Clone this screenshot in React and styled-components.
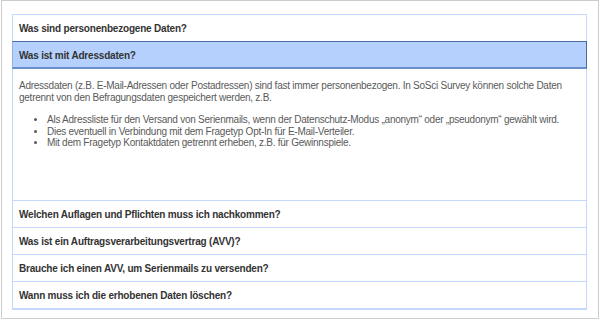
import React, { useState } from 'react';
import styled, { createGlobalStyle } from 'styled-components';

const GlobalStyle = createGlobalStyle`
  html, body {
    margin: 0;
    padding: 0;
    background: #ffffff;
  }
  body {
    font-family: 'Liberation Sans', Arial, sans-serif;
  }
`;

// Styled Components
const Frame = styled.div`
  box-sizing: border-box;
  width: 598px;
  height: 319px;
  margin-left: 1px;
  border: 1px solid #cccccc;
  padding: 13px 10px 0 10px;
  background: #ffffff;
`;

const Accordion = styled.div`
  width: 575px;
  border-bottom: 2px solid #c3d8fb;
`;

const Item = styled.div`
  display: flex;
  flex-direction: column;
`;

const Header = styled.button`
  box-sizing: border-box;
  display: flex;
  align-items: center;
  width: 100%;
  height: ${(p) => (p.$active ? '28px' : '27px')};
  margin: 0;
  padding: 1px 0 0 6px;
  font-family: 'Liberation Sans', Arial, sans-serif;
  font-size: 10px;
  font-weight: bold;
  letter-spacing: -0.2px;
  color: #333333;
  text-align: left;
  cursor: pointer;
  background: ${(p) => (p.$active ? '#b5d0fc' : '#ffffff')};
  border-style: solid;
  border-width: ${(p) => (p.$active ? '1px 1px 2px 1px' : '1px 1px 0 1px')};
  border-color: ${(p) =>
    p.$active ? '#4b6ba6 #4b6ba6 #6a8dcb #8eb0ea' : '#c3d8fb'};
`;

const Content = styled.div`
  box-sizing: border-box;
  height: 131px;
  padding: 11px 6px 0 6px;
  border-left: 1px solid #c3d8fb;
  border-right: 1px solid #c3d8fb;
  font-size: 10px;
  letter-spacing: -0.25px;
  line-height: 12px;
  color: #5a5a5a;
`;

const Paragraph = styled.p`
  margin: 0 0 10px 0;
`;

const List = styled.ul`
  margin: 0;
  padding: 0 0 0 28px;
  line-height: 11.5px;
`;

const faq = [
  { q: 'Was sind personenbezogene Daten?' },
  { q: 'Was ist mit Adressdaten?' },
  { q: 'Welchen Auflagen und Pflichten muss ich nachkommen?' },
  { q: 'Was ist ein Auftragsverarbeitungsvertrag (AVV)?' },
  { q: 'Brauche ich einen AVV, um Serienmails zu versenden?' },
  { q: 'Wann muss ich die erhobenen Daten löschen?' },
];

const App = () => {
  const [open, setOpen] = useState(1);

  return (
    <>
      <GlobalStyle />
      <Frame>
        <Accordion>
          {faq.map((item, i) => (
            <Item key={item.q}>
              <Header $active={open === i} onClick={() => setOpen(open === i ? -1 : i)}>
                {item.q}
              </Header>
              {open === i && i === 1 && (
                <Content>
                  <Paragraph>
                    Adressdaten (z.B. E-Mail-Adressen oder Postadressen) sind fast immer
                    personenbezogen. In SoSci Survey können solche Daten getrennt von den
                    Befragungsdaten gespeichert werden, z.B.
                  </Paragraph>
                  <List>
                    <li>
                      Als Adressliste für den Versand von Serienmails, wenn der
                      Datenschutz-Modus „anonym“ oder „pseudonym“ gewählt wird.
                    </li>
                    <li>Dies eventuell in Verbindung mit dem Fragetyp Opt-In für E-Mail-Verteiler.</li>
                    <li>Mit dem Fragetyp Kontaktdaten getrennt erheben, z.B. für Gewinnspiele.</li>
                  </List>
                </Content>
              )}
            </Item>
          ))}
        </Accordion>
      </Frame>
    </>
  );
};

export default App;
